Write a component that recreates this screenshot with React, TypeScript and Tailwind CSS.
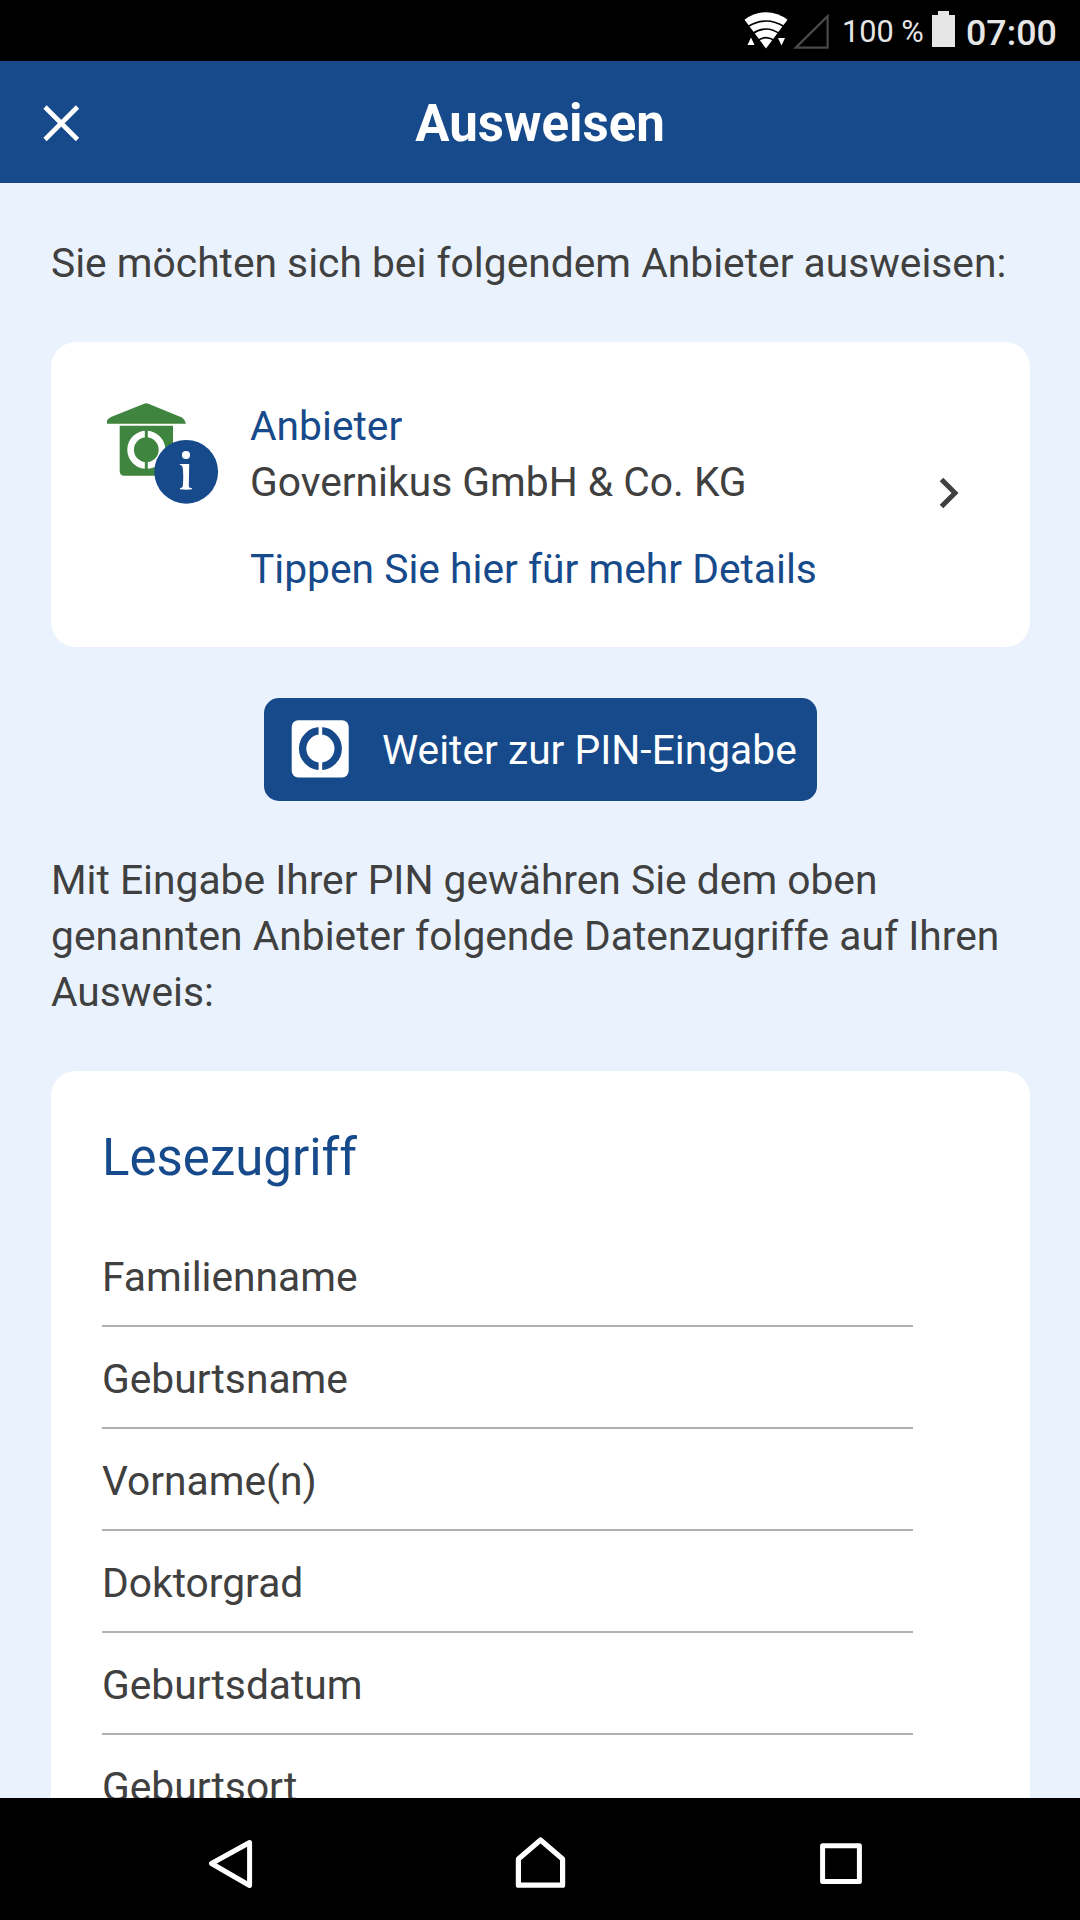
const fields = ["Familienname", "Geburtsname", "Vorname(n)", "Doktorgrad", "Geburtsdatum", "Geburtsort"];

function WifiIcon() {
  return (
    <svg width="44" height="38" viewBox="744 11 44 38" className="block">
      <path d="M766 48.5 L744.5 19.8 Q754 12.2 766 12.2 Q778 12.2 787.5 19.8 Z" fill="#fff" />
      <g fill="none" stroke="#000" strokeWidth="1.7">
        <path d="M747.5 26.8 Q766 15.2 784.5 26.8" />
        <path d="M752 34 Q766 24 780 34" />
        <path d="M757 41 Q766 34.2 775 41" />
      </g>
      <path d="M747.5 45 L751 37.5 L754.5 45 Z M778 38 H785 L781.5 45.5 Z" fill="#fff" />
    </svg>
  );
}

function SignalIcon() {
  return (
    <svg width="38" height="38" viewBox="792 12 38 38" className="block">
      <path d="M795.8 47.6 L827.6 16.2 V47.6 Z" fill="none" stroke="#4a4a4a" strokeWidth="2.2" />
    </svg>
  );
}

function ProviderIcon() {
  return (
    <svg width="114" height="104" viewBox="105 401 114 104" className="block">
      <path
        d="M107 423.8 V420.5 Q108 418.5 111 417 L143.5 404 Q146.3 402.4 149 404 L182 417.5 Q185 419.5 186 423.8 Z"
        fill="#40853f"
      />
      <path d="M119.7 425.7 H173 V475.8 H124.5 Q119.7 475.8 119.7 471 Z" fill="#40853f" />
      <circle cx="146.3" cy="449.7" r="15.7" fill="none" stroke="#fff" strokeWidth="6.6" />
      <path d="M146.3 428 V472" stroke="#40853f" strokeWidth="3" />
      <circle cx="186.2" cy="471.8" r="31.9" fill="#174a8b" />
      <circle cx="186" cy="455" r="4.1" fill="#fff" />
      <path
        d="M179.8 464 H189.2 L188.8 486.5 Q189.2 488 192 488.3 V489.3 Q186 490.2 180 489.3 V488.3 Q182.6 488 182.8 486.3 Q183.8 475 182.6 467 Q182 465 179.8 464.8 Z"
        fill="#fff"
      />
    </svg>
  );
}

function PinIcon() {
  return (
    <svg width="58" height="58" viewBox="0 0 58 58" className="block">
      <rect x="0.7" y="0.3" width="57" height="57.2" rx="6.5" fill="#fff" />
      <circle cx="29.4" cy="28.6" r="17.8" fill="none" stroke="#174a8b" strokeWidth="7.4" />
      <path d="M29.4 4 V53" stroke="#fff" strokeWidth="3.6" />
    </svg>
  );
}

export default function App() {
  return (
    <div className="flex h-[1920px] w-[1080px] flex-col overflow-hidden bg-[#eaf3fd] font-['Roboto',sans-serif] text-[40.75px] leading-[56px] text-[#404040]">
      <div className="flex h-[61px] shrink-0 items-start justify-end bg-black pr-6 text-[#e6e6e6]">
        <div className="mt-[11px]"><WifiIcon /></div>
        <div className="mt-3 ml-1"><SignalIcon /></div>
        <span className="mt-[13px] ml-3 w-[83px] whitespace-nowrap text-[30.7px] leading-[37px]">100 %</span>
        <svg width="23" height="36" viewBox="0 0 23 36" className="mt-[11px] ml-[7px] block">
          <path d="M6 0 H17 V4 H23 V36 H0 V4 H6 Z" fill="#e6e6e6" />
        </svg>
        <span className="mt-3 ml-[11px] w-[90px] whitespace-nowrap text-[35.8px] leading-[42px] font-medium">07:00</span>
      </div>

      <header className="grid h-[122px] shrink-0 grid-cols-[120px_1fr_120px] items-center bg-[#174a8b] text-white">
        <button aria-label="Schließen" className="mt-px ml-[42px] w-[38px]">
          <svg width="38" height="38" viewBox="0 0 38 38" className="block">
            <path d="M3 3 L35.5 35.5 M35.5 3 L3 35.5" stroke="#fff" strokeWidth="4.6" />
          </svg>
        </button>
        <h1 className="pt-[3px] text-center text-[51px] leading-[60px] font-bold">Ausweisen</h1>
      </header>

      <main className="flex min-h-0 flex-1 flex-col overflow-hidden px-[51px] pt-[52px]">
        <p className="whitespace-nowrap">Sie möchten sich bei folgendem Anbieter ausweisen:</p>

        <section className="mt-[51px] flex h-[305px] w-[979px] shrink-0 rounded-[25px] bg-white pt-14 pl-[54px]">
          <div className="mt-[3px] w-[145px] shrink-0"><ProviderIcon /></div>
          <div className="w-[689px] whitespace-nowrap">
            <h2 className="text-[#174a8b]">Anbieter</h2>
            <p>Governikus GmbH &amp; Co. KG</p>
            <p className="mt-[31px] text-[#174a8b]">Tippen Sie hier für mehr Details</p>
          </div>
          <svg width="20" height="32" viewBox="0 0 20 32" className="mt-[79px] block">
            <path d="M2.5 2.5 L16 16 L2.5 29.5" fill="none" stroke="#404040" strokeWidth="5" />
          </svg>
        </section>

        <button className="mt-[51px] ml-[213px] flex h-[103px] w-[553px] shrink-0 items-start rounded-[15px] bg-[#174a8b] pt-[22px] pl-[27px] text-white">
          <PinIcon />
          <span className="mt-[2px] ml-[33px] whitespace-nowrap">Weiter zur PIN-Eingabe</span>
        </button>

        <p className="mt-[51px] whitespace-nowrap">
          Mit Eingabe Ihrer PIN gewähren Sie dem oben
          <br />
          genannten Anbieter folgende Datenzugriffe auf Ihren
          <br />
          Ausweis:
        </p>

        <section className="mt-[51px] w-[979px] shrink-0 rounded-t-[25px] bg-white px-[51px] pt-[57px]">
          <h2 className="text-[51px] leading-[60px] text-[#174a8b]">Lesezugriff</h2>
          <ul className="mt-[37px] w-[811px]">
            {fields.map((field) => (
              <li key={field} className="h-[102px] border-b-2 border-[#b0b0b0] pt-6">{field}</li>
            ))}
          </ul>
        </section>
      </main>

      <nav className="flex h-[122px] shrink-0 items-start bg-black pl-[206px]">
        <svg width="50" height="56" viewBox="206 1836 50 56" className="mt-[38px] block" fill="none" stroke="#fff" strokeWidth="5" strokeLinejoin="round">
          <path d="M249.6 1842.5 L211.5 1863.5 L249.6 1885.5 Z" />
        </svg>
        <svg width="54" height="56" viewBox="513 1835 54 56" className="mt-[37px] ml-[257px] block" fill="none" stroke="#fff" strokeWidth="5.2" strokeLinejoin="round">
          <path d="M518.4 1885.2 V1859 L540.5 1840 L562.6 1859 V1885.2 Z" />
        </svg>
        <svg width="44" height="44" viewBox="819 1842 44 44" className="mt-[44px] ml-[252px] block" fill="none" stroke="#fff" strokeWidth="5" strokeLinejoin="round">
          <path d="M822.6 1845.7 H859.4 V1881.6 H822.6 Z" />
        </svg>
      </nav>
    </div>
  );
}
